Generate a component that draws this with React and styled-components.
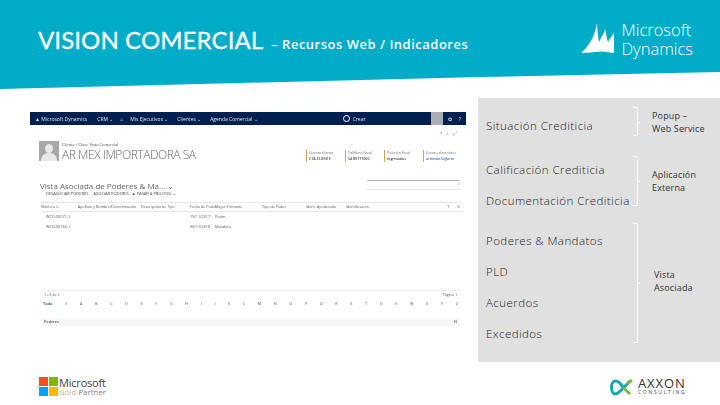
import React from "react";
import styled, { createGlobalStyle } from "styled-components";

const GlobalStyle = createGlobalStyle`
  html, body { margin: 0; padding: 0; background: #fff; }
  body { font-family: "Open Sans", "Liberation Sans", sans-serif; }
`;

const Page = styled.div`
  width: 720px;
  height: 405px;
  overflow: hidden;
  background: #fff;
  display: flex;
  flex-direction: column;
`;

const Header = styled.header`
  height: 89px;
  flex: none;
  background: #00acc8;
  clip-path: polygon(0 0, 100% 0, 100% 72px, 480px 77px, 240px 83px, 0 89px);
  display: flex;
  justify-content: space-between;
  align-items: flex-start;
  padding: 23px 27px 0 38px;
  box-sizing: border-box;
`;

const Title = styled.h1`
  margin: 0;
  color: #fff;
  font-family: Lato, "Open Sans", sans-serif;
  font-weight: 400;
  -webkit-text-stroke: 0.3px #fff;
  font-size: 24px;
  letter-spacing: 0.1px;
  line-height: 33px;
  white-space: nowrap;
`;

const Subtitle = styled.span`
  font-family: "Open Sans", sans-serif;
  font-size: 13px;
  font-weight: 600;
  margin-left: 8px;
  letter-spacing: 0.5px;
  -webkit-text-stroke: 0;
`;

const DynamicsLogo = styled.div`
  display: flex;
  gap: 7px;
  color: #fff;
`;

const DynamicsName = styled.div`
  font-family: "Open Sans", sans-serif;
  font-weight: 300;
  font-size: 16.500px;
  line-height: 19px;
  margin-top: -3px;
`;

const Main = styled.main`
  flex: none;
  height: 264px;
  margin-top: 9px;
  display: flex;
`;

const ShotColumn = styled.div`
  flex: 1;
  padding: 14px 12px 0 30px;
  min-width: 0;
`;

const Shot = styled.div`
  font-family: "Open Sans", sans-serif;
  color: #555;
  filter: blur(0.55px);
  display: flex;
  flex-direction: column;
  height: 214px;
  font-size: 4px;
  line-height: 6px;
  white-space: nowrap;
`;

const Nav = styled.div`
  height: 13px;
  flex: none;
  background: #002050;
  color: #dfe6f0;
  display: flex;
  align-items: center;
  font-size: 5px;
  padding-left: 5px;
`;

const NavItem = styled.span`
  margin-right: ${(p) => p.$gap}px;
`;

const NavSearch = styled.span`
  width: 7px;
  height: 7px;
  border-radius: 50%;
  border: 1px solid #fff;
  margin-right: 3px;
  box-sizing: border-box;
`;

const NavAvatar = styled.span`
  width: 12px;
  height: 13px;
  background: #a9adb5;
  margin-left: auto;
  margin-right: 5px;
`;

const ToolIcons = styled.div`
  text-align: right;
  padding: 5px 5px 0 0;
  height: 11px;
  flex: none;
  font-size: 5px;
  letter-spacing: 4px;
`;

const Record = styled.div`
  display: flex;
  padding: 0 10px 0 9px;
  height: 33px;
  flex: none;
  box-sizing: border-box;
`;

const Avatar = styled.div`
  width: 20px;
  height: 20px;
  background: #a7a7a7;
  flex: none;
  position: relative;
  overflow: hidden;
  &::before {
    content: "";
    position: absolute;
    left: 6px;
    top: 3px;
    width: 8px;
    height: 9px;
    border-radius: 50%;
    background: #e8e8e8;
  }
  &::after {
    content: "";
    position: absolute;
    left: 2px;
    top: 12px;
    width: 16px;
    height: 12px;
    border-radius: 7px 7px 0 0;
    background: #e8e8e8;
  }
`;

const RecordName = styled.div`
  margin-left: 3px;
  color: #666;
  font-size: 12px;
  letter-spacing: -0.450px;
  font-weight: 300;
  line-height: 13px;
  small {
    display: block;
    font-size: 4px;
    letter-spacing: 0;
    line-height: 6px;
    font-weight: 400;
    color: #444;
    margin-top: 1px;
  }
`;

const Kpis = styled.div`
  margin-left: auto;
  display: flex;
  gap: 6px;
  padding-top: 9px;
`;

const Kpi = styled.div`
  width: 33px;
  height: 12px;
  box-sizing: border-box;
  border-left: 1px solid #c8a550;
  padding-left: 2px;
  font-size: 3.600px;
  line-height: 5.500px;
  color: #666;
  overflow: hidden;
  b {
    display: block;
    font-weight: 600;
    color: ${(p) => p.$tone || "#444"};
  }
`;

const ViewRow = styled.div`
  display: flex;
  align-items: flex-end;
  justify-content: space-between;
  padding: 0 6px 0 10px;
  height: 15px;
  flex: none;
  margin-top: 2px;
  font-size: 8px;
  line-height: 10px;
  color: #666;
`;

const SearchBox = styled.div`
  width: 93px;
  height: 8px;
  border-top: 1px solid #bbb;
  border-bottom: 1px solid #e5e5e5;
  text-align: right;
  font-size: 4px;
  line-height: 6px;
  margin-bottom: 1px;
`;

const Commands = styled.div`
  padding-left: 16px;
  height: 9px;
  flex: none;
  font-size: 4px;
  color: #444;
`;

const Grid = styled.div`
  flex: none;
  margin: 2px 0 0 11px;
  width: 422px;
`;

const GridHead = styled.div`
  display: grid;
  grid-template-columns: 37px 63px 49px 25px 47px 44px 40px 1fr 10px auto;
  border-top: 1px solid #e6e6e6;
  border-bottom: 1px solid #e6e6e6;
  height: 8px;
  font-size: 3.700px;
  line-height: 7px;
  color: #555;
  overflow: hidden;
  padding-right: 3px;
`;

const GridRow = styled.div`
  display: grid;
  grid-template-columns: 144px 25px 1fr;
  height: 10px;
  line-height: 10px;
  padding-left: 5px;
  font-size: 3.800px;
  color: #555;
`;

const Pager = styled.div`
  margin: auto 6px 0 11px;
  border-top: 1px solid #ececec;
  padding: 1px 3px 0;
  display: flex;
  justify-content: space-between;
  height: 8px;
  box-sizing: content-box;
  flex: none;
  font-size: 3.700px;
`;

const Alpha = styled.div`
  margin: 0 8px 0 11px;
  display: flex;
  justify-content: space-between;
  font-size: 3.800px;
  height: 8px;
  line-height: 8px;
  flex: none;
  span:first-child {
    color: #2a6f9c;
    font-weight: 700;
    margin-left: 2px;
  }
`;

const Total = styled.div`
  margin: 10px 6px 0 11px;
  background: #f6f6f6;
  height: 8px;
  line-height: 8px;
  padding: 0 3px;
  display: flex;
  justify-content: space-between;
  font-size: 3.800px;
  font-weight: 600;
  flex: none;
`;

const Panel = styled.aside`
  width: 242px;
  flex: none;
  background: #e0e0e0;
  box-sizing: border-box;
  padding: 9px 0 0 8px;
  display: flex;
  flex-direction: column;
`;

const Group = styled.section`
  display: flex;
  height: ${(p) => p.$height}px;
  margin-bottom: ${(p) => p.$after}px;
  flex: none;
`;

const Items = styled.div`
  width: 147px;
  flex: none;
  display: flex;
  flex-direction: column;
  justify-content: center;
  gap: 14px;
  padding-top: 7px;
  box-sizing: border-box;
`;

const Item = styled.div`
  font-family: "Open Sans", sans-serif;
  font-weight: 300;
  font-size: 11.500px;
  line-height: 17px;
  letter-spacing: 0.450px;
  color: #222;
  white-space: nowrap;
`;

const Bracket = styled.div`
  width: 5px;
  flex: none;
  box-sizing: border-box;
  border: 1px solid #fff;
  border-left: 0;
  position: relative;
  &::after {
    content: "";
    position: absolute;
    left: 100%;
    top: 50%;
    width: 3px;
    height: 1px;
    background: #fff;
  }
`;

const Note = styled.div`
  font-family: "Open Sans", sans-serif;
  font-size: 9px;
  line-height: 13px;
  letter-spacing: 0.150px;
  color: #333;
  align-self: center;
  margin-left: ${(p) => p.$indent}px;
  margin-top: ${(p) => p.$shift || 0}px;
  white-space: nowrap;
`;

const Footer = styled.footer`
  flex: 1;
  display: flex;
  justify-content: space-between;
  padding: 15px 35px 0 39px;
`;

const GoldPartner = styled.div`
  display: flex;
  gap: 1px;
  height: 20px;
`;

const Squares = styled.div`
  width: 19px;
  height: 19px;
  display: grid;
  grid-template-columns: 1fr 1fr;
  gap: 1px;
`;

const Square = styled.i`
  background: ${(p) => p.$color};
`;

const GoldText = styled.div`
  font-family: "Open Sans", sans-serif;
  font-size: 11px;
  line-height: 11px;
  color: #444;
  letter-spacing: -0.200px;
  small {
    display: block;
    font-size: 7.500px;
    line-height: 9px;
    color: #777;
    letter-spacing: 0.200px;
    b {
      font-weight: 400;
      color: #c9b458;
    }
  }
`;

const Axxon = styled.div`
  display: flex;
  gap: 3px;
`;

const AxxonMark = styled.svg`
  margin-top: 2px;
`;

const AxxonName = styled.div`
  width: 47px;
  font-family: "Open Sans", sans-serif;
  font-size: 13px;
  line-height: 12px;
  letter-spacing: 0.900px;
  color: #333;
  white-space: nowrap;
  small {
    display: block;
    font-size: 5px;
    line-height: 6px;
    letter-spacing: 1.700px;
    color: #444;
  }
`;

const letters = ["#", ..."ABCDEFGHIJKLMNOPQRSTUVWXYZ"];
const squareColors = ["#f25022", "#7fba00", "#00a4ef", "#ffb900"];
const columns = ["Número C.", "Apellido y Nombre/Denominación", "Descripción de Tipo", "Fecha de Poder", "Mayor Firmante", "Tipo de Poder", "Ident. Apoderado", "Identificación", "T", "O"];

export default function App() {
  return (
    <>
      <GlobalStyle />
      <Page>
        <Header>
          <Title>
            VISION COMERCIAL<Subtitle>– Recursos Web / Indicadores</Subtitle>
          </Title>
          <DynamicsLogo>
            <svg width="32" height="30" viewBox="0 0 32 30">
              <path
                fill="#fff"
                d="M0 29C6 24 13 14 15 0C15.500 8 16 14 17 19C19 15 22 10 23.500 6C24 12 25 16 26 19C28 15 30 13 32 10L32 30L20 28.500L8 29.500L0 30Z"
              />
            </svg>
            <DynamicsName>
              Microsoft
              <br />
              Dynamics
            </DynamicsName>
          </DynamicsLogo>
        </Header>

        <Main>
          <ShotColumn>
            <Shot>
              <Nav>
                <NavItem $gap={10}>▲ Microsoft Dynamics</NavItem>
                <NavItem $gap={7}>CRM ⌄</NavItem>
                <NavItem $gap={7}>⌂</NavItem>
                <NavItem $gap={9}>Mis Ejecutivos ⌄</NavItem>
                <NavItem $gap={9}>Clientes ⌄</NavItem>
                <NavItem $gap={85}>Agenda Comercial ⌄</NavItem>
                <NavSearch />
                <span>Crear</span>
                <NavAvatar />
                <NavItem $gap={7}>✿</NavItem>
                <NavItem $gap={5}>?</NavItem>
              </Nav>
              <ToolIcons>↑↓⤢</ToolIcons>
              <Record>
                <Avatar />
                <RecordName>
                  <small>Cliente / Clave Vista Comercial</small>
                  AR MEX IMPORTADORA SA
                </RecordName>
                <Kpis>
                  <Kpi>
                    Cuenta cliente<b>CTA.CLIENTE</b>
                  </Kpi>
                  <Kpi>
                    Teléfono fiscal<b>54 89777000</b>
                  </Kpi>
                  <Kpi>
                    Posición fiscal<b>Ingresados</b>
                  </Kpi>
                  <Kpi $tone="#3b6ea5">
                    Correo electrónico<b>armexinfo@arm</b>
                  </Kpi>
                </Kpis>
              </Record>
              <ViewRow>
                <span>Vista Asociada de Poderes &amp; Ma... ⌄</span>
                <SearchBox>⌕</SearchBox>
              </ViewRow>
              <Commands>DESASOCIAR PODERES &nbsp;&nbsp;&nbsp; ASOCIAR PODERES &nbsp; ▲ PASAR A PROCESO ⌄</Commands>
              <Grid>
                <GridHead>
                  {columns.map((c) => (
                    <span key={c}>{c}</span>
                  ))}
                </GridHead>
                <GridRow>
                  <span>WCD-00071-1</span>
                  <span>19/11/2017</span>
                  <span>Poder</span>
                </GridRow>
                <GridRow>
                  <span>WCD-00163-1</span>
                  <span>06/11/2018</span>
                  <span>Mandato</span>
                </GridRow>
              </Grid>
              <Pager>
                <span>1 - 2 de 2</span>
                <span>Página 1</span>
              </Pager>
              <Alpha>
                <span>Todo</span>
                {letters.map((l) => (
                  <span key={l}>{l}</span>
                ))}
              </Alpha>
              <Total>
                <span>Poderes</span>
                <span>N</span>
              </Total>
            </Shot>
          </ShotColumn>

          <Panel>
            <Group $height={29} $after={20}>
              <Items>
                <Item>Situación Crediticia</Item>
              </Items>
              <Bracket />
              <Note $indent={14}>
                Popup –
                <br />
                Web Service
              </Note>
            </Group>
            <Group $height={50} $after={17}>
              <Items>
                <Item>Calificación Crediticia</Item>
                <Item>Documentación Crediticia</Item>
              </Items>
              <Bracket />
              <Note $indent={14}>
                Aplicación
                <br />
                Externa
              </Note>
            </Group>
            <Group $height={120} $after={0}>
              <Items>
                <Item>Poderes &amp; Mandatos</Item>
                <Item>PLD</Item>
                <Item>Acuerdos</Item>
                <Item>Excedidos</Item>
              </Items>
              <Bracket />
              <Note $indent={16} $shift={-5}>
                Vista
                <br />
                Asociada
              </Note>
            </Group>
          </Panel>
        </Main>

        <Footer>
          <GoldPartner>
            <Squares>
              {squareColors.map((c) => (
                <Square key={c} $color={c} />
              ))}
            </Squares>
            <GoldText>
              Microsoft
              <small>
                <b>Gold</b> Partner
              </small>
            </GoldText>
          </GoldPartner>
          <Axxon>
            <AxxonMark width="25" height="17" viewBox="0 0 25 17" fill="none">
              <path d="M13 8.500C10 3 7.500 2 5.500 2C3 2 1.500 5 1.500 8.500C1.500 12 3 15 5.500 15C9 15 13 9 20 2" stroke="#1aa3b5" strokeWidth="3" />
              <path d="M13 8.500L20 15" stroke="#7ab648" strokeWidth="3" />
              <path d="M17 5L22 1" stroke="#7ab648" strokeWidth="3" />
            </AxxonMark>
            <AxxonName>
              AXXON
              <small>CONSULTING</small>
            </AxxonName>
          </Axxon>
        </Footer>
      </Page>
    </>
  );
}
